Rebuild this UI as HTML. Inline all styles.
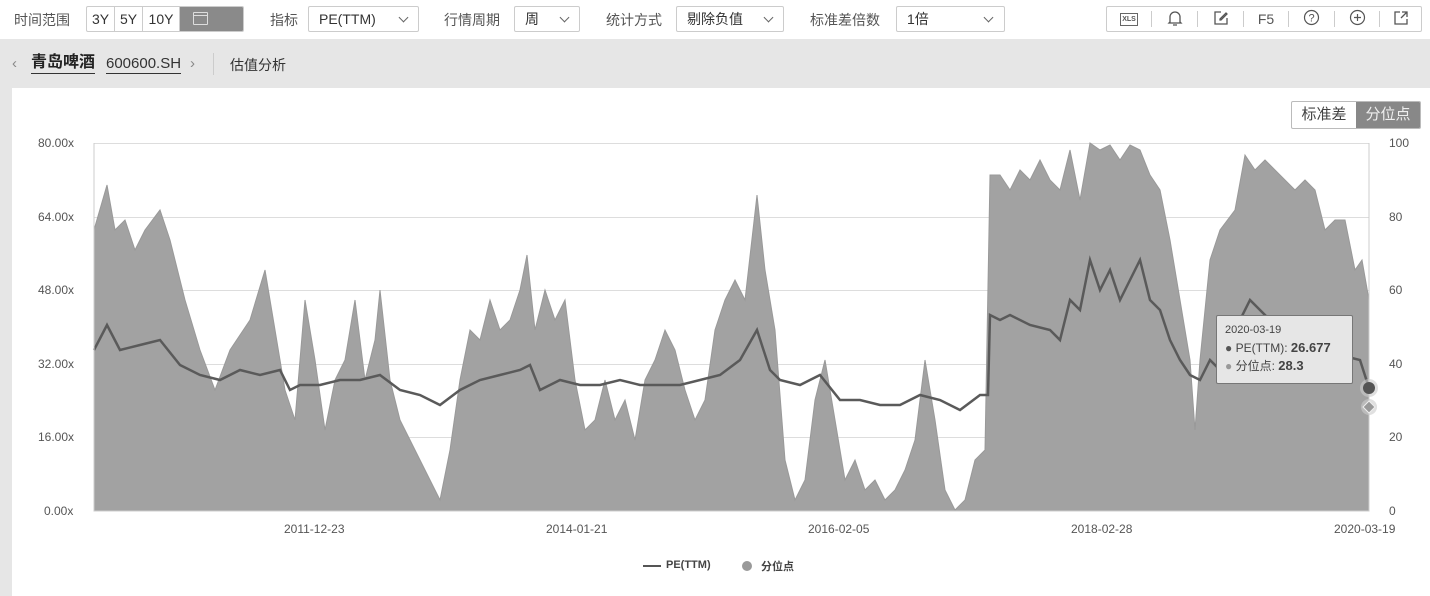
<!DOCTYPE html>
<html><head><meta charset="utf-8"><style>
*{margin:0;padding:0;box-sizing:border-box}
body{width:1430px;height:596px;background:#fff;font-family:"Liberation Sans","Noto Sans CJK SC",sans-serif;color:#333;position:relative;overflow:hidden;font-size:14px}
.a{position:absolute;white-space:nowrap}
.box{position:absolute;border:1px solid #ccc;border-radius:2px;height:26px;top:6px;background:#fff}
.lbl{position:absolute;top:10px;font-size:14px;color:#555}
.sel{font-size:14px;color:#333;line-height:24px;padding-left:10px}
.chev{position:absolute;top:7px;width:7px;height:7px;border-right:1.3px solid #666;border-bottom:1.3px solid #666;transform:rotate(45deg)}
.ax{font-size:12px;color:#555}
</style></head><body>
<!-- top bar -->
<div class="lbl" style="left:14px">时间范围</div>
<div class="box" style="left:86px;width:158px;overflow:hidden;display:flex">
 <div style="width:28px;text-align:center;line-height:24px;border-right:1px solid #ccc">3Y</div>
 <div style="width:28px;text-align:center;line-height:24px;border-right:1px solid #ccc">5Y</div>
 <div style="width:37px;text-align:center;line-height:24px;border-right:1px solid #ccc">10Y</div>
 <div style="flex:1;background:#8a8a8a;position:relative"><div style="position:absolute;left:13px;top:5px;width:15px;height:13px;border:1.3px solid #ddd;border-radius:1px"></div><div style="position:absolute;left:13px;top:8px;width:15px;border-top:1.3px solid #ddd"></div></div>
</div>
<div class="lbl" style="left:270px">指标</div>
<div class="box" style="left:308px;width:111px"><div class="sel">PE(TTM)</div><div class="chev" style="left:91px"></div></div>
<div class="lbl" style="left:444px">行情周期</div>
<div class="box" style="left:514px;width:66px"><div class="sel">周</div><div class="chev" style="left:46px"></div></div>
<div class="lbl" style="left:606px">统计方式</div>
<div class="box" style="left:676px;width:108px"><div class="sel">剔除负值</div><div class="chev" style="left:88px"></div></div>
<div class="lbl" style="left:810px">标准差倍数</div>
<div class="box" style="left:896px;width:109px"><div class="sel">1倍</div><div class="chev" style="left:88px"></div></div>
<div class="box" style="left:1106px;width:316px;display:flex;align-items:center;font-size:14px;color:#555">
 <div style="width:44px;text-align:center;font-size:7px;font-weight:bold"><span style="border:1px solid #666;padding:2px 1px">XLS</span></div>
 <div style="width:1px;height:16px;background:#ccc"></div>
 <div style="width:45px;text-align:center">
  <svg width="16" height="18" viewBox="0 0 16 18"><path d="M3 13V8a5 5 0 0 1 10 0v5l1 1H2z M6 16h4" fill="none" stroke="#555" stroke-width="1.3"/></svg></div>
 <div style="width:1px;height:16px;background:#ccc"></div>
 <div style="width:45px;text-align:center"><svg width="16" height="16" viewBox="0 0 16 16"><path d="M8 2H2v12h12V8 M7 9l6-6 1 1-6 6H7z" fill="none" stroke="#555" stroke-width="1.3"/></svg></div>
 <div style="width:1px;height:16px;background:#ccc"></div>
 <div style="width:44px;text-align:center">F5</div>
 <div style="width:1px;height:16px;background:#ccc"></div>
 <div style="width:45px;text-align:center"><svg width="17" height="17" viewBox="0 0 17 17"><circle cx="8.5" cy="8.5" r="7" fill="none" stroke="#555" stroke-width="1.2"/><text x="8.5" y="12.5" font-size="11" text-anchor="middle" fill="#555" font-family="Liberation Sans">?</text></svg></div>
 <div style="width:1px;height:16px;background:#ccc"></div>
 <div style="width:44px;text-align:center"><svg width="17" height="17" viewBox="0 0 17 17"><circle cx="8.5" cy="8.5" r="7" fill="none" stroke="#555" stroke-width="1.2"/><path d="M8.5 5v7M5 8.5h7" stroke="#555" stroke-width="1.2"/></svg></div>
 <div style="width:1px;height:16px;background:#ccc"></div>
 <div style="flex:1;text-align:center"><svg width="16" height="16" viewBox="0 0 16 16"><path d="M7 2H2v12h12V9 M9 2h5v5 M14 2L8 8" fill="none" stroke="#555" stroke-width="1.3"/></svg></div>
</div>
<!-- gray band -->
<div class="a" style="left:0;top:39px;width:1430px;height:557px;background:#e6e6e6"></div>
<div class="a" style="left:12px;top:55px;font-size:15px;color:#888">‹</div>
<div class="a" style="left:31px;top:53px;font-size:16px;font-weight:bold;color:#222;border-bottom:1px solid #333;line-height:20px">青岛啤酒</div>
<div class="a" style="left:106px;top:54px;font-size:15px;color:#333;border-bottom:1px solid #333;line-height:19px">600600.SH</div>
<div class="a" style="left:190px;top:55px;font-size:15px;color:#888">›</div>
<div class="a" style="left:213px;top:53px;width:1px;height:22px;background:#ccc"></div>
<div class="a" style="left:230px;top:55px;font-size:14px;color:#333">估值分析</div>
<!-- card -->
<div class="a" style="left:12px;top:88px;width:1418px;height:508px;background:#fff"></div>
<div class="a" style="left:1291px;top:101px;width:130px;height:28px;border:1px solid #bbb;border-radius:2px;display:flex;font-size:15px;overflow:hidden">
 <div style="width:64px;text-align:center;line-height:26px;color:#444">标准差</div>
 <div style="flex:1;background:#888;color:#eee;text-align:center;line-height:26px">分位点</div>
</div>
<!-- axes labels -->
<div class="a ax" style="left:38px;top:136px">80.00x</div>
<div class="a ax" style="left:38px;top:210px">64.00x</div>
<div class="a ax" style="left:38px;top:283px">48.00x</div>
<div class="a ax" style="left:38px;top:357px">32.00x</div>
<div class="a ax" style="left:38px;top:430px">16.00x</div>
<div class="a ax" style="left:44px;top:504px">0.00x</div>
<div class="a ax" style="left:1389px;top:136px">100</div>
<div class="a ax" style="left:1389px;top:210px">80</div>
<div class="a ax" style="left:1389px;top:283px">60</div>
<div class="a ax" style="left:1389px;top:357px">40</div>
<div class="a ax" style="left:1389px;top:430px">20</div>
<div class="a ax" style="left:1389px;top:504px">0</div>
<div class="a ax" style="left:284px;top:522px">2011-12-23</div>
<div class="a ax" style="left:546px;top:522px">2014-01-21</div>
<div class="a ax" style="left:808px;top:522px">2016-02-05</div>
<div class="a ax" style="left:1071px;top:522px">2018-02-28</div>
<div class="a ax" style="left:1334px;top:522px">2020-03-19</div>
<svg class="a" style="left:0;top:0" width="1430" height="596">
 <g stroke="#ddd" stroke-width="1"><path d="M94 143.5H1369M94 217.5H1369M94 290.5H1369M94 364.5H1369M94 437.5H1369"/></g>
 <path d="M94 511 L94 230 107 185 115 230 125 220 135 250 145 230 160 210 170 240 185 300 200 350 215 390 230 350 250 320 265 270 275 330 285 390 295 420 305 300 315 360 325 430 335 380 345 360 355 300 365 380 375 340 380 290 390 380 400 420 410 440 420 460 430 480 440 500 450 450 460 380 470 330 480 340 490 300 500 330 510 320 520 290 527 255 535 330 545 290 555 320 565 300 575 380 585 430 595 420 605 380 615 420 625 400 635 440 645 380 655 360 665 330 675 350 685 390 695 420 705 400 715 330 725 300 735 280 745 300 757 195 765 270 775 330 785 460 795 500 805 480 815 400 825 360 835 420 845 480 855 460 865 490 875 480 885 500 895 490 905 470 915 440 925 360 935 420 945 490 955 510 965 500 975 460 985 450 990 175 1000 175 1010 190 1020 170 1030 180 1040 160 1050 180 1060 190 1070 150 1080 200 1090 143 1100 150 1110 145 1120 160 1130 145 1140 150 1150 175 1160 190 1170 240 1180 300 1190 360 1195 430 1200 360 1210 260 1220 230 1235 210 1245 155 1255 170 1265 160 1275 170 1285 180 1295 190 1305 180 1315 190 1325 230 1335 220 1345 220 1355 270 1362 260 1369 300 L1369 511Z" fill="#a2a2a2" stroke="#999" stroke-width="1"/>
 <path d="M94 350 107 325 120 350 140 345 160 340 180 365 200 375 220 380 240 370 260 375 280 370 290 390 300 385 320 385 340 380 360 380 380 375 400 390 420 395 440 405 460 390 480 380 500 375 520 370 530 365 540 390 560 380 580 385 600 385 620 380 640 385 660 385 680 385 700 380 720 375 740 360 757 330 770 370 780 380 800 385 820 375 840 400 860 400 880 405 900 405 920 395 940 400 960 410 980 395 988 395 990 315 1000 320 1010 315 1030 325 1050 330 1060 340 1070 300 1080 310 1090 260 1100 290 1110 270 1120 300 1130 280 1140 260 1150 300 1160 310 1170 340 1180 360 1190 375 1200 380 1210 360 1220 370 1240 320 1250 300 1260 310 1270 320 1280 340 1300 340 1320 350 1340 355 1360 360 1369 388" fill="none" stroke="#5a5a5a" stroke-width="2.5"/>
 <path d="M94 143V511H1369V143" fill="none" stroke="#ccc"/>
 <circle cx="1369" cy="388" r="9" fill="#ccc" opacity=".6"/><circle cx="1369" cy="388" r="6" fill="#555"/>
 <circle cx="1369" cy="407" r="8" fill="#ccc" opacity=".6"/><path d="M1369 401l6 6-6 6-6-6z" fill="#999" stroke="#eee"/>
 <path d="M643 566h18" stroke="#555" stroke-width="2"/>
 <circle cx="747" cy="566" r="5" fill="#999"/>
</svg>
<div class="a" style="left:1216px;top:315px;width:137px;height:69px;background:#e6e6e6;border:1px solid #777;border-radius:2px;font-size:12px;color:#444;padding:6px 0 0 8px;line-height:17px">
 <div style="font-size:11px">2020-03-19</div>
 <div><span style="color:#555">●</span> PE(TTM): <b style="font-size:13px">26.677</b></div>
 <div><span style="color:#999">●</span> 分位点: <b style="font-size:13px">28.3</b></div>
</div>
<div class="a" style="left:666px;top:559px;font-size:11px;font-weight:bold;color:#444">PE(TTM)</div>
<div class="a" style="left:761px;top:558px;font-size:11px;font-weight:bold;color:#444">分位点</div>
</body></html>
